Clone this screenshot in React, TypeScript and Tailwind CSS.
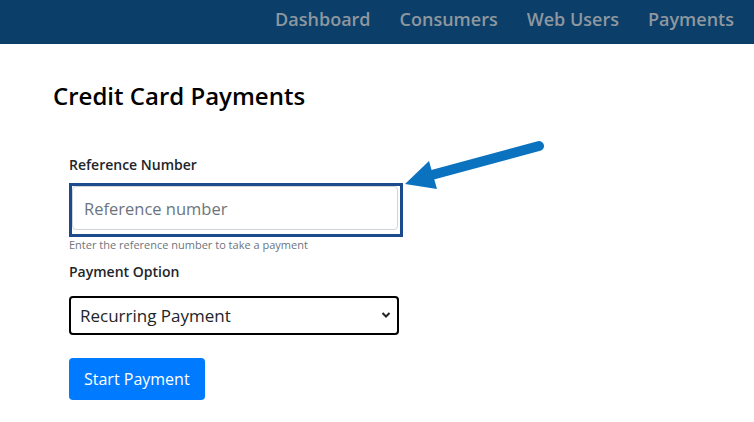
import React from 'react';

const navItems = ['Dashboard', 'Consumers', 'Web Users', 'Payments'];

const App: React.FC = () => {
  return (
    <div className="relative min-h-[422px] w-[754px] bg-white font-['Open_Sans',sans-serif] text-[#212529]">
      <nav className="h-[44px] bg-[#0b3f69] flex items-center justify-end pr-[20px] pb-[6px] gap-[29px]">
        {navItems.map((item) => (
          <a key={item} className="text-[18px] font-semibold text-[#8e979f] leading-none">
            {item}
          </a>
        ))}
      </nav>

      <div className="pl-[53px] pt-[37px]">
        <h1 className="text-[24px] font-semibold leading-[30px] text-black">Credit Card Payments</h1>

        <form className="pl-[16px] pt-[44px] w-[347px]">
          <label className="block text-[14px] font-semibold leading-[20px] mb-[8px]">Reference Number</label>
          <div className="border-[3px] border-[#1b4a8d] w-[334px] h-[54px]">
            <input
              className="w-[326px] h-[44px] border border-[#ced4da] rounded-[4px] px-[11px] text-[16.5px] placeholder:text-[#6c757d] outline-none"
              placeholder="Reference number"
            />
          </div>
          <p className="text-[11px] text-[#6c757d] leading-[15px]">Enter the reference number to take a payment</p>

          <label className="block text-[14px] font-semibold leading-[20px] mt-[10px] mb-[14px]">Payment Option</label>
          <div className="relative w-[330px] h-[39px] border-2 border-black rounded-[4px] flex items-center px-[9px]">
            <span className="text-[17px]">Recurring Payment</span>
            <svg className="absolute right-[6px] top-[13px]" width="10" height="8" viewBox="0 0 10 8">
              <path d="M1.5 2 L5 5.5 L8.5 2" fill="none" stroke="#222" strokeWidth="2" />
            </svg>
          </div>

          <button
            type="button"
            className="mt-[23px] h-[42px] px-[15px] bg-[#007bff] text-white text-[16px] rounded-[4px]"
          >
            Start Payment
          </button>
        </form>
      </div>

      <svg className="absolute left-0 top-0 pointer-events-none" width="754" height="422">
        <line x1="539" y1="146" x2="428" y2="176" stroke="#0a72bf" strokeWidth="10" strokeLinecap="round" />
        <polygon points="405,184 429,161 437,189" fill="#0a72bf" />
      </svg>
    </div>
  );
};

export default App;
